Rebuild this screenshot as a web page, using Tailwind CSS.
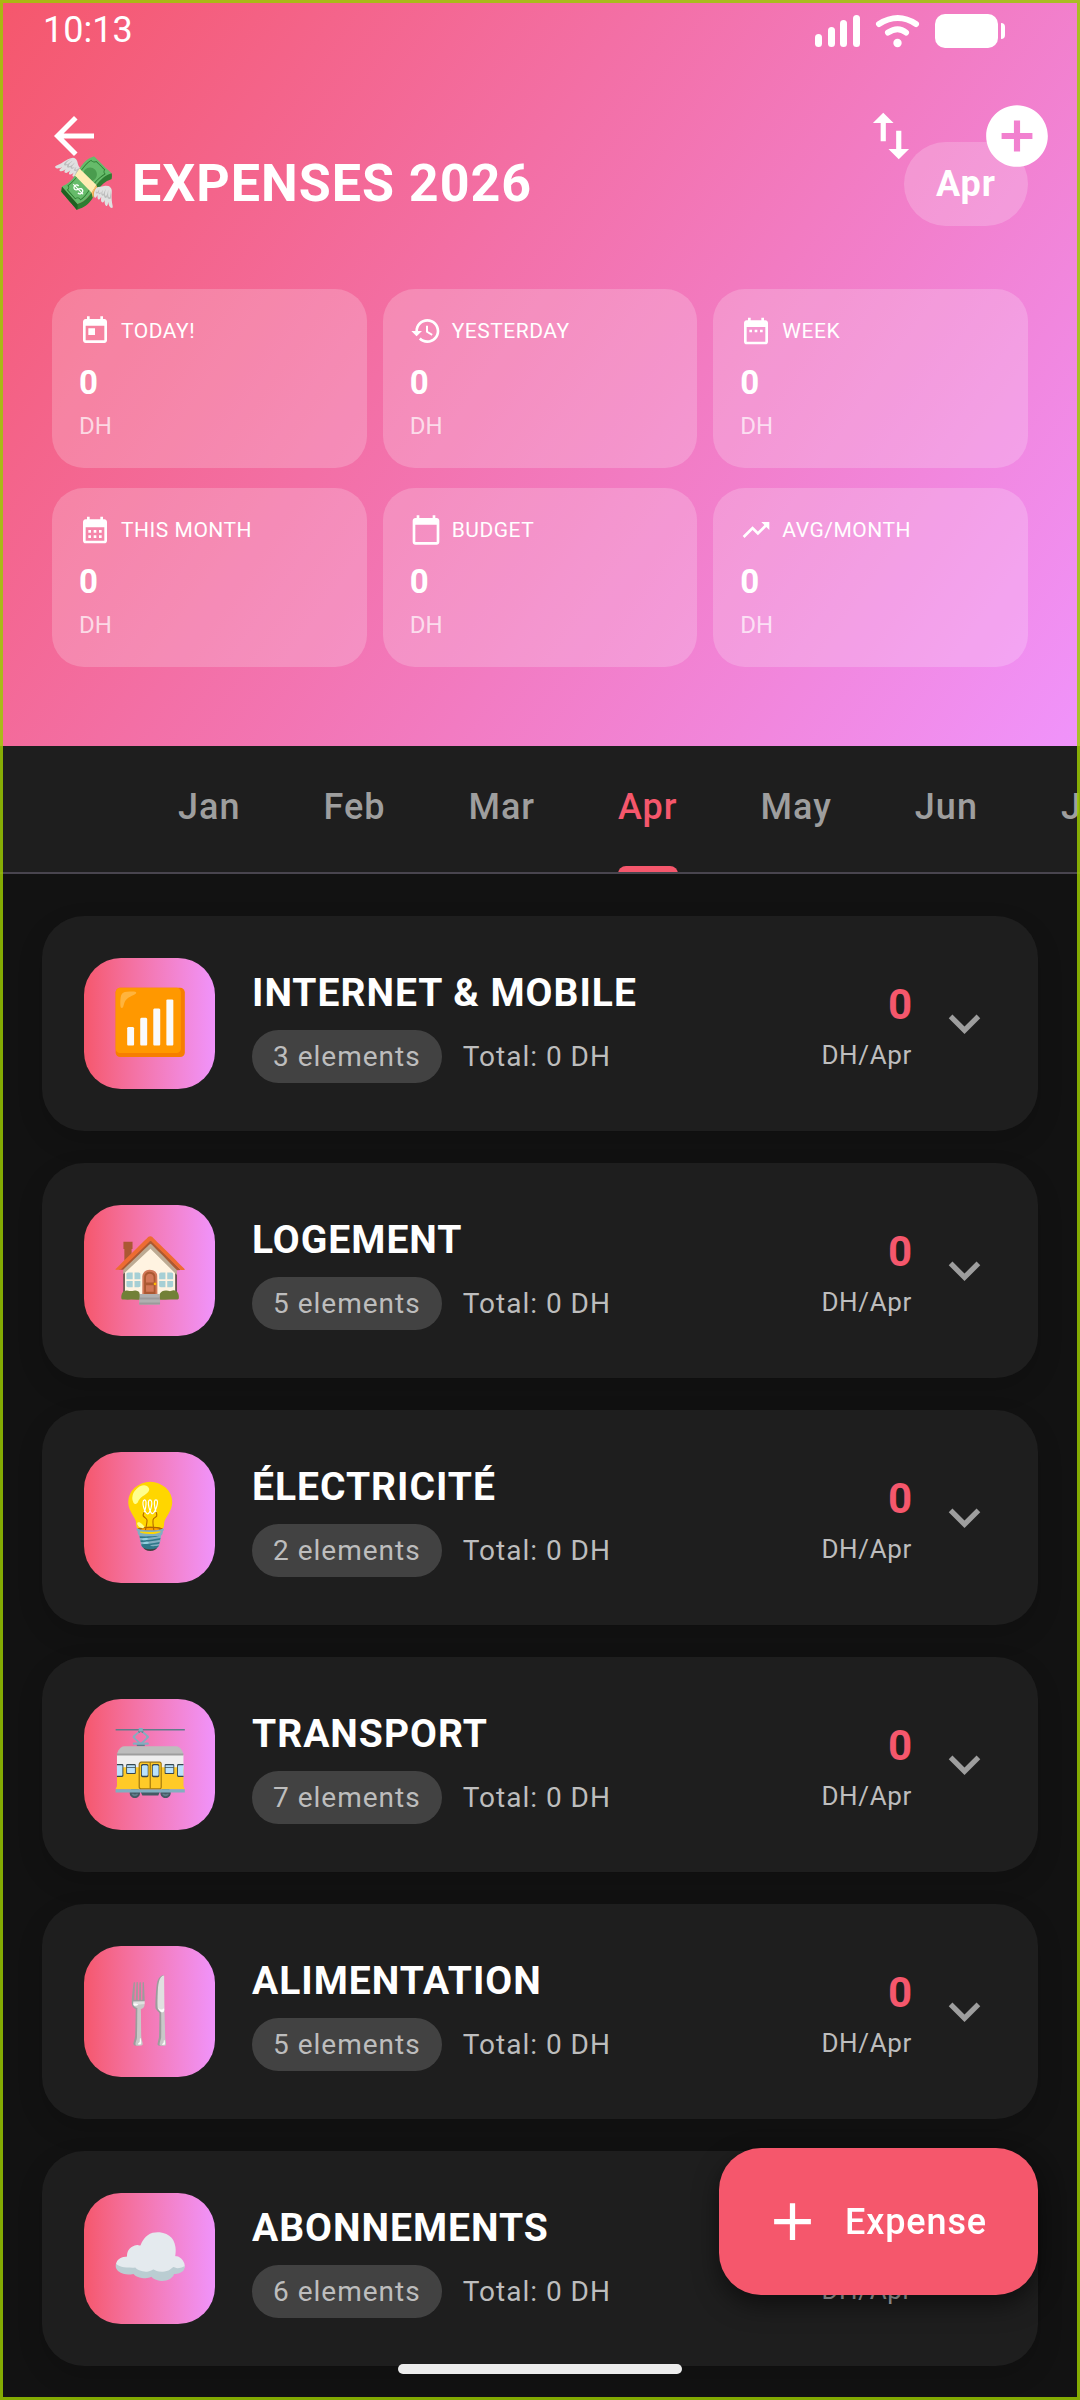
<!DOCTYPE html>
<html lang="en">
<head>
    <meta charset="UTF-8">
    <meta name="viewport" content="width=device-width, initial-scale=1.0">
    <title>Expenses 2026</title>
    <script src="https://cdn.jsdelivr.net/npm/@tailwindcss/browser@4"></script>
</head>
<body class="bg-[#121212] font-['Roboto',sans-serif] text-white">
    <div class="relative min-h-screen overflow-hidden">
        <header class="bg-[linear-gradient(125deg,#f5576c,#f093fb)] pb-[79px]">
            <!-- Status bar -->
            <div class="flex h-[60px] items-center justify-between pl-[43px] pr-[74px]">
                <span class="text-[36px] leading-[40px]">10:13</span>
                <svg class="h-[36px] w-[192px]" viewBox="0 0 192 36" fill="#fff">
                    <rect x="1" y="22" width="7" height="13" rx="3.5"/>
                    <rect x="14" y="15" width="7" height="20" rx="3.5"/>
                    <rect x="26" y="8" width="7" height="27" rx="3.5"/>
                    <rect x="39" y="3" width="7" height="32" rx="3.5"/>
                    <path d="M65 12Q84 0 102 12M74 20.500Q84 14 92 20.500" fill="none" stroke="#fff" stroke-width="6" stroke-linecap="round"/>
                    <circle cx="83.500" cy="31" r="4.200"/>
                    <rect x="121" y="2" width="63" height="34" rx="10"/>
                    <path d="M187 11q4 0 4 4v8q0 4-4 4z"/>
                </svg>
            </div>
            <!-- App bar -->
            <div class="relative z-10 flex h-[152px] items-center pl-[44px] pr-[26px]">
                <button type="button" aria-label="Back">
                    <svg class="size-[60px]" viewBox="0 0 24 24" fill="#fff"><path d="M20 11H7.830l5.590-5.590L12 4l-8 8 8 8 1.410-1.410L7.830 13H20v-2z"/></svg>
                </button>
                <button type="button" aria-label="Sort" class="ml-auto">
                    <svg class="size-[62px]" viewBox="0 0 24 24" fill="#fff"><path d="M9 3L5 6.990h3V14h2V6.990h3L9 3zm7 14.010V10h-2v7.010h-3L15 21l4-3.990h-3z"/></svg>
                </button>
                <button type="button" aria-label="Add" class="ml-[58px]">
                    <svg class="size-[74px]" viewBox="0 0 24 24" fill="#fff"><path d="M12 2C6.480 2 2 6.480 2 12s4.480 10 10 10 10-4.480 10-10S17.520 2 12 2zm5 11h-4v4h-2v-4H7v-2h4V7h2v4h4v2z"/></svg>
                </button>
            </div>
            <div class="-mt-[70px] flex items-center justify-between px-[52px]">
                <h1 class="text-[52px] font-bold leading-[60px] tracking-[1px]">💸 EXPENSES 2026</h1>
                <span class="rounded-full bg-white/20 px-8 py-[20px] text-[36px] font-bold leading-[44px] tracking-[1px]">Apr</span>
            </div>
            <section id="stats" class="mt-[63px] grid grid-cols-3 gap-x-4 gap-y-[20px] px-[52px]"></section>
        </header>

        <nav id="months" class="flex h-32 gap-[83px] overflow-hidden border-b-2 border-[#49454f] bg-[#1e1e1e] pl-[178px]"></nav>

        <main id="categories" class="flex flex-col gap-8 px-[42px] pb-[34px] pt-[42px]"></main>

        <button type="button" class="fixed bottom-[105px] right-[42px] flex h-[147px] items-center gap-[21px] rounded-[42px] bg-[#f5576c] pl-[42px] pr-[51px] text-[36px] font-medium tracking-wide shadow-[0_10px_24px_rgba(0,0,0,0.5)]">
            <svg class="size-[63px]" viewBox="0 0 24 24" fill="#fff"><path d="M19 13h-6v6h-2v-6H5v-2h6V5h2v6h6v2z"/></svg>
            Expense
        </button>
        <div class="fixed bottom-[26px] left-1/2 h-[10px] w-[284px] -translate-x-1/2 rounded-full bg-[#ececec]"></div>
        <div class="pointer-events-none fixed inset-0 z-20 border-[3px] border-[#9bca00]/83"></div>
    </div>

    <script>
        const icons = {
            today: 'M19 3h-1V1h-2v2H8V1H6v2H5c-1.110 0-1.990.900-1.990 2L3 19c0 1.100.890 2 2 2h14c1.100 0 2-.900 2-2V5c0-1.100-.900-2-2-2zm0 16H5V8h14v11zM7 10h5v5H7z',
            history: 'M13 3c-4.970 0-9 4.030-9 9H1l3.890 3.890.070.140L9 12H6c0-3.870 3.130-7 7-7s7 3.130 7 7-3.130 7-7 7c-1.930 0-3.680-.790-4.940-2.060l-1.420 1.420C8.270 19.990 10.510 21 13 21c4.970 0 9-4.030 9-9s-4.030-9-9-9zm-1 5v5l4.280 2.540.720-1.210-3.500-2.080V8H12z',
            week: 'M9 11H7v2h2v-2zm4 0h-2v2h2v-2zm4 0h-2v2h2v-2zm2-7h-1V2h-2v2H8V2H6v2H5c-1.110 0-1.990.900-1.990 2L3 20c0 1.100.890 2 2 2h14c1.100 0 2-.900 2-2V6c0-1.100-.900-2-2-2zm0 16H5V9h14v11z',
            month: 'M19 4h-1V2h-2v2H8V2H6v2H5c-1.110 0-1.990.900-1.990 2L3 20c0 1.100.890 2 2 2h14c1.100 0 2-.900 2-2V6c0-1.100-.900-2-2-2zm0 16H5V10h14v10zM9 14H7v-2h2v2zm4 0h-2v-2h2v2zm4 0h-2v-2h2v2zm-8 4H7v-2h2v2zm4 0h-2v-2h2v2zm4 0h-2v-2h2v2z',
            budget: 'M20 3h-1V1h-2v2H7V1H5v2H4c-1.100 0-2 .900-2 2v16c0 1.100.900 2 2 2h16c1.100 0 2-.900 2-2V5c0-1.100-.900-2-2-2zm0 18H4V8h16v13z',
            trend: 'M16 6l2.290 2.290-4.880 4.880-4-4L2 16.590 3.410 18l6-6 4 4 6.300-6.290L22 12V6z'
        };
        const stats = [
            ['today', 'TODAY!'],
            ['history', 'YESTERDAY'],
            ['week', 'WEEK'],
            ['month', 'THIS MONTH'],
            ['budget', 'BUDGET'],
            ['trend', 'AVG/MONTH']
        ];
        const months = ['Jan', 'Feb', 'Mar', 'Apr', 'May', 'Jun', 'Jul'];
        const categories = [
            ['📶', 'INTERNET &amp; MOBILE', 3],
            ['🏠', 'LOGEMENT', 5],
            ['💡', 'ÉLECTRICITÉ', 2],
            ['🚋', 'TRANSPORT', 7],
            ['🍴', 'ALIMENTATION', 5],
            ['☁️', 'ABONNEMENTS', 6]
        ];

        document.getElementById('stats').innerHTML = stats.map(([icon, label]) => `
            <div class="rounded-[32px] bg-white/20 px-[27px] py-[26px]">
                <div class="flex items-center gap-[10px]">
                    <svg class="size-8" viewBox="0 0 24 24" fill="#fff"><path d="${icons[icon]}"/></svg>
                    <span class="text-[21px] leading-[32px] tracking-wide">${label}</span>
                </div>
                <p class="mt-4 text-[33px] font-bold leading-[40px]">0</p>
                <p class="mt-[7px] text-[24px] leading-[32px] text-white/70">DH</p>
            </div>`).join('');

        document.getElementById('months').innerHTML = months.map((month) => month === 'Apr'
            ? `<button type="button" class="relative h-[121px] shrink-0 text-[36px] font-medium tracking-[1px] text-[#f5576c]">${month}<span class="absolute inset-x-0 top-[120px] h-2 rounded-t-lg bg-[#f5576c]"></span></button>`
            : `<button type="button" class="h-[121px] shrink-0 text-[36px] font-medium tracking-[1px] text-[#9e9e9e]">${month}</button>`).join('');

        document.getElementById('categories').innerHTML = categories.map(([emoji, name, count]) => `
            <article class="flex items-center rounded-[42px] bg-[#1e1e1e] p-[42px] shadow-[0_10px_26px_rgba(0,0,0,0.15)]">
                <div class="flex size-[131px] items-center justify-center rounded-[37px] bg-linear-to-r from-[#f5576c] to-[#f093fb] text-[63px]">${emoji}</div>
                <div class="ml-[37px]">
                    <h2 class="text-[39px] font-bold leading-[58px] tracking-[1px]">${name}</h2>
                    <div class="mt-2 flex items-center gap-[21px] text-[28px] leading-[53px] tracking-[1px] text-[#bdbdbd]">
                        <span class="rounded-full bg-[#424242] px-[21px]">${count} elements</span>
                        <span>Total: 0 DH</span>
                    </div>
                </div>
                <div class="ml-auto text-right">
                    <p class="text-[42px] font-bold leading-[62px] text-[#f5576c]">0</p>
                    <p class="text-[26px] leading-[38px] tracking-wide text-[#bdbdbd]">DH/Apr</p>
                </div>
                <button type="button" aria-label="Expand" class="ml-[21px]">
                    <svg class="size-[63px]" viewBox="0 0 24 24" fill="#9e9e9e"><path d="M16.590 8.590L12 13.170 7.410 8.590 6 10l6 6 6-6z"/></svg>
                </button>
            </article>`).join('');
    </script>
</body>
</html>
